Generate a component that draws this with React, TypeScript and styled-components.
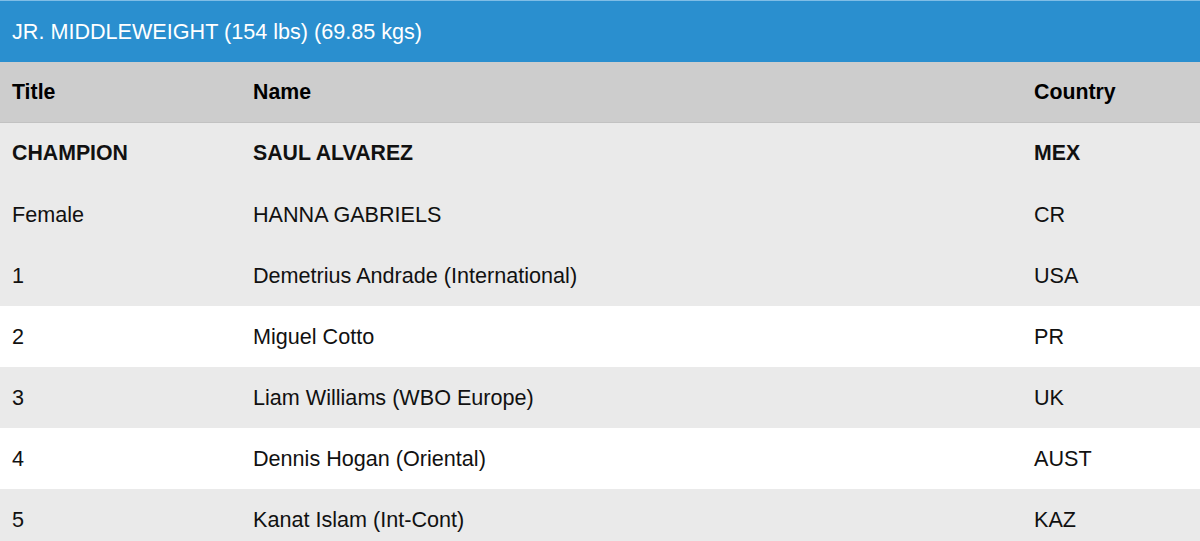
import React from "react";
import styled, { createGlobalStyle } from "styled-components";

const GlobalStyle = createGlobalStyle`
  html, body {
    margin: 0;
    padding: 0;
    background: #fff;
    font-family: "Liberation Sans", Arial, sans-serif;
  }
`;

const rows = [
  { title: "CHAMPION", name: "SAUL ALVAREZ", country: "MEX", strong: true, shade: true },
  { title: "Female", name: "HANNA GABRIELS", country: "CR", shade: true },
  { title: "1", name: "Demetrius Andrade (International)", country: "USA", shade: true },
  { title: "2", name: "Miguel Cotto", country: "PR", shade: false },
  { title: "3", name: "Liam Williams (WBO Europe)", country: "UK", shade: true },
  { title: "4", name: "Dennis Hogan (Oriental)", country: "AUST", shade: false },
  { title: "5", name: "Kanat Islam (Int-Cont)", country: "KAZ", shade: true },
];

export default function App() {
  return (
    <>
      <GlobalStyle />
      <Root>
        <Caption>JR. MIDDLEWEIGHT (154 lbs) (69.85 kgs)</Caption>
        <HeadRow>
          <Cell>Title</Cell>
          <Cell>Name</Cell>
          <Cell>Country</Cell>
        </HeadRow>
        {rows.map((r) => (
          <Row key={r.title} $shade={r.shade} $strong={r.strong}>
            <Cell>{r.title}</Cell>
            <Cell>{r.name}</Cell>
            <Cell>{r.country}</Cell>
          </Row>
        ))}
      </Root>
    </>
  );
}

const Root = styled.div`
  width: 1200px;
  border-top: 1px solid #7fbde6;
`;

const Caption = styled.div`
  height: 61px;
  display: flex;
  align-items: center;
  padding: 0 12px;
  background: #2a8fcf;
  color: #fff;
  font-size: 21.6px;
`;

const Grid = styled.div`
  display: grid;
  grid-template-columns: 241px 781px 1fr;
  align-items: center;
  height: 61px;
  font-size: 21.6px;
  color: #111;
`;

const HeadRow = styled(Grid)`
  background: #cdcdcd;
  border-bottom: 1px solid #c2c2c2;
  height: 60px;
  font-weight: bold;
  font-size: 21.3px;
  color: #000;
`;

const Row = styled(Grid)<{ $shade?: boolean; $strong?: boolean }>`
  background: ${(p) => (p.$shade ? "#eaeaea" : "#fff")};
  font-weight: ${(p) => (p.$strong ? "bold" : "normal")};
  font-size: ${(p) => (p.$strong ? "21.3px" : "21.6px")};
`;

const Cell = styled.div`
  padding: 0 12px;
  white-space: nowrap;
`;
